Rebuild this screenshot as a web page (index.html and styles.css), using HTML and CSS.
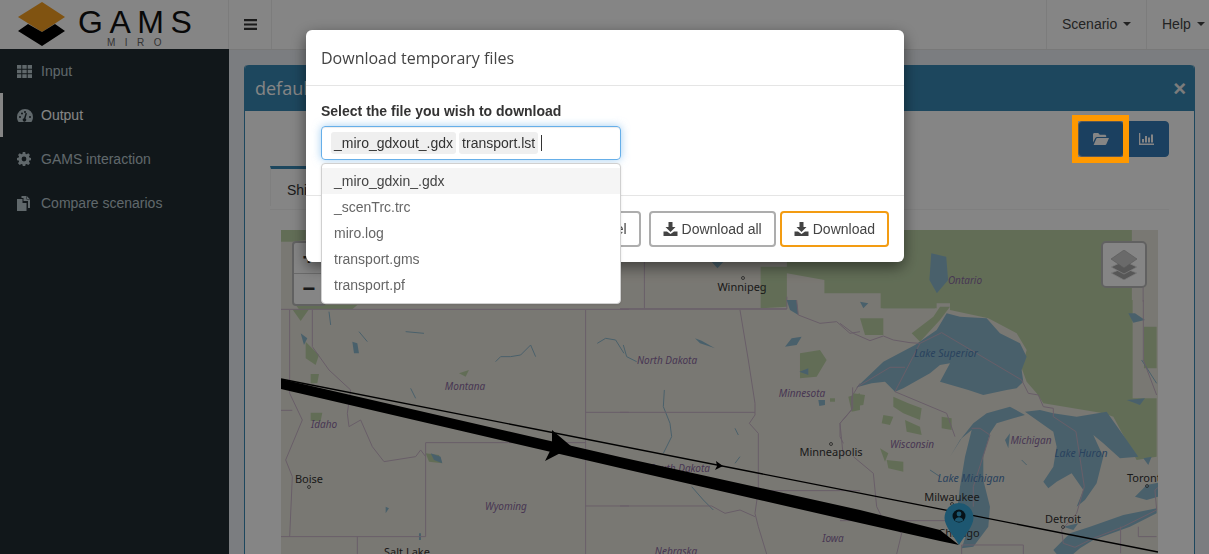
FILE: index.html
```html
<!DOCTYPE html>
<html>
<head>
    <title>GAMS MIRO</title>
<link rel="stylesheet" href="styles.css">
</head>
<body>

<div class="app">

  <header class="topbar">
    <div class="logo">
      <svg class="logo-mark" viewBox="0 0 84 50" width="84" height="50">
        <polygon class="logo-top" points="18,17 42,2 65,17 42,32"/>
        <polygon class="logo-bottom" points="18,31 28,24 42,32 55,24 65,31 42,46"/>
      </svg>
      <div class="logo-text">
        <span class="logo-gams">GAMS</span>
        <span class="logo-miro">MIRO</span>
      </div>
    </div>
    <div class="hamburger">
      <svg viewBox="0 0 13 11" width="13" height="11"><path d="M0 0h13v2.200H0zM0 4.400h13v2.200H0zM0 8.800h13V11H0z"/></svg>
    </div>
    <div class="spacer"></div>
    <div class="topmenu scenario">Scenario <span class="caret"></span></div>
    <div class="topmenu help">Help <span class="caret"></span></div>
  </header>

  <div class="main">
    <nav class="sidebar">
      <a class="side-item">
        <span class="side-icon"><svg viewBox="0 0 15 13" width="15" height="13"><path d="M0 0h4.300v3.700H0zM5.300 0h4.400v3.700H5.300zM10.700 0H15v3.700h-4.300zM0 4.700h4.300v3.600H0zM5.300 4.700h4.400v3.600H5.300zM10.700 4.700H15v3.600h-4.300zM0 9.300h4.300V13H0zM5.300 9.300h4.400V13H5.300zM10.700 9.300H15V13h-4.300z"/></svg></span>
        Input
      </a>
      <a class="side-item active">
        <span class="side-icon"><svg viewBox="0 0 16 13" width="16" height="13"><path fill-rule="evenodd" d="M8 0a8 8 0 0 1 8 8c0 1.900-.6 3.600-1.600 5H1.600C.6 11.600 0 9.900 0 8a8 8 0 0 1 8-8zM8.600 4 7 9.200a1.700 1.700 0 1 0 1.500.3L10 4.300zM3 7a1 1 0 1 0 0 2 1 1 0 0 0 0-2zM5 3.500a1 1 0 1 0 0 2 1 1 0 0 0 0-2zM13 7a1 1 0 1 0 0 2 1 1 0 0 0 0-2zM8 2a1 1 0 1 0 0 2 1 1 0 0 0 0-2z"/></svg></span>
        Output
      </a>
      <a class="side-item">
        <span class="side-icon"><svg viewBox="0 0 14 14" width="14" height="14"><path fill-rule="evenodd" d="M5.800 0h2.400l.4 1.900 1 .4L11.300 1.200 13 2.900l-1.100 1.700.4 1L14 5.900v2.300l-1.700.4-.4 1 1.100 1.700-1.700 1.700-1.700-1.100-1 .4-.4 1.700H5.800l-.4-1.700-1-.4-1.700 1.100L1 11.300l1.100-1.700-.4-1L0 8.200V5.900l1.700-.3.4-1L1 2.900l1.700-1.700 1.700 1.100 1-.4zM7 4.600a2.400 2.400 0 1 0 0 4.800 2.400 2.400 0 0 0 0-4.800z"/></svg></span>
        GAMS interaction
      </a>
      <a class="side-item">
        <span class="side-icon"><svg viewBox="0 0 13 15" width="13" height="15"><path d="M4.500 2V0h5v3.500h3.500V12h-2V5H6.500V2zM10 .3l2.700 2.700H10zM0 3h5.500v4h4v8H0z"/></svg></span>
        Compare scenarios
      </a>
    </nav>

    <section class="content">
      <div class="box">
        <div class="box-header">
          <span class="box-title">default</span>
          <span class="box-close">&times;</span>
        </div>
        <div class="box-body">
          <div class="view-buttons">
            <button class="view-btn current">
              <svg viewBox="0 0 16 12" width="16" height="12"><path d="M0 1.500C0 .7.600 0 1.400 0h3.800l1.600 1.700h5c.8 0 1.400.6 1.400 1.300v1H4.200c-.9 0-1.500.4-1.900 1.100L0 9.500z"/><path d="M4.300 5H16l-2.700 6.200c-.2.500-.6.800-1.200.8H.6l2.700-6.300c.2-.4.500-.7 1-.7z"/></svg>
              <span class="ring"></span>
            </button>
            <button class="view-btn">
              <svg viewBox="0 0 15 12" width="15" height="12"><path d="M0 0h1.300v10.500H15V12H0zM3 6h2v3.500H3zM6 3h2v6.500H6zM9 4.500h2v5H9zM12 1.500h2v8h-2z"/></svg>
            </button>
          </div>
          <div class="tabs">
            <div class="tab">Shipments</div>
          </div>

          <div class="map">
            <svg class="map-svg" viewBox="281 230 877 324" width="877" height="324">
              <rect class="land" x="281" y="230" width="877" height="324"/>

              <!-- west part -->
              <g transform="translate(229 220) scale(.3333)">
                <path class="forest" d="M156 30H230V60L190 65H156zM190 268l25 35 25-35zM230 365l40 40-10 30-30-20zM245 462l25 0-5 28-20 0zM245 578h35l-5 25h-30zM590 700l40 5 10 25-40-5zM690 460l30-10-10 20zM200 255H385L370 268H210z"/>
                <path class="water" d="M370 365l15 5 5 30-15 0zM215 340l20 15-10 20zM470 860l10 5-10 15zM570 940h6v20h-6zM605 700l30 10 5 20-25-10z"/>
                <path class="river" d="M800 425l15-15 30 0 30-5 30-30 15 35M1105 370l25-15 30 5 25 40M545 505l15 30M530 335l55 5M390 335l25 30M300 275l5 40"/>
                <path class="border" d="M156 268H1200M250 270V380L300 450L365 510L355 580L360 620L395 600L430 680L465 725L560 710L575 690L590 710M590 668H1070M590 668V950M1070 270V1002M1070 577H1200M1070 858H1200M182 270V520L220 600L170 720L190 770L182 950M156 950H590M385 950V1002M156 571H190"/>
              </g>

              <!-- strip above 300, Canada side -->
              <g transform="translate(620 260) scale(.375 .3333)">
                <path class="forest" d="M880-90H1365V125H880zM445-90H880V130H840V145H695V100H545V60L445 40zM375 20H445V140L375 145z"/>
                <path class="water" d="M830-20L870-10L875 60L845 100L825 60zM240 0L280 0L260 25z"/>
                <path class="border" d="M0 147H445V110M65-40V145M1395 0V125"/>
              </g>

              <!-- middle part -->
              <g transform="translate(620 300) scale(.3333)">
                <path class="forest" d="M540 160L600 150L620 180L590 230L540 235zM685 290L720 280V330L695 335zM630 295H645V305H630z"/>
                <path class="water" d="M495 140L515 115L545 110L530 135zM538 215L565 205L565 225zM595 300L615 300L615 315L598 318zM500 0L530 0L535 45L510 30zM225 115L245 122L285 145L240 130z"/>
                <path class="river" d="M10 135L20 170L50 185M133 270L130 320L150 370L155 410L130 460M215 560L250 600L280 630M345 385L355 405M345 490L360 470"/>
                <path class="border" d="M0 27H500M360 30L385 180L405 310V345L388 370L415 400V570L405 640L415 680L440 762M0 337H405M0 618H275L315 640L360 630L405 650M415 572H720M720 250L695 290V330L660 370L670 470M530 0L535 45L600 70L650 65L690 100L720 95"/>
              </g>

              <!-- east part -->
              <g transform="translate(840 300) scale(.3333)">
                <path class="forest" d="M330 0H878V295H950V470L890 480L820 350L790 340L610 310L590 280L560 245L545 205L560 150L530 100L445 55L330 30zM912 80H950V205H912zM128 0H290V25H128zM60 55H130V105H75zM215 100L280 50L300 20L330 20L300 60L240 125zM40 280L75 285L70 315L35 320zM160 290L205 310L245 325L240 360L190 340L160 320zM130 345L160 350L150 375L125 370zM305 350L335 355L335 390L305 385zM140 480L190 485L190 515L145 505zM120 445L145 460L135 485zM195 360L240 380L245 405L200 395z"/>
                <path class="water" d="M50 262L130 185L225 135L290 90L320 40L360 50L440 55L480 100L540 130L560 170L545 210L550 245L530 265L500 270L430 285L385 270L300 245L330 190L300 195L270 220L190 265L165 275L135 245L95 250z"/>
                <path class="water" d="M330 470L360 420L400 370L440 340L510 320L555 345L520 355L470 370L450 400L430 470L430 540L450 620L445 680L400 740L365 745L380 700L350 640L360 560L375 470L395 390L365 415z"/>
                <path class="water" d="M555 335L600 330L640 340L710 350L800 335L860 420L895 470L840 475L790 430L760 405L790 470L770 550L735 600L710 620L730 570L695 520L650 545L625 565L610 545L640 500L650 440L640 395L590 360z"/>
                <path class="water" d="M640 750L690 700L750 680L850 645L950 625V640L870 680L760 720L720 745L700 762H650zM885 590L920 555L955 548V590L920 600zM670 680L715 670L700 690zM865 40L885 40L915 60L880 68zM860 300L915 295L900 315zM60 5L85 10L70 25zM495 420L510 400L505 445zM910 475L935 470L925 495z"/>
                <path class="river" d="M905 180L950 250M270 510L300 530M545 480L560 495"/>
                <path class="border" d="M0 70L40 100L90 122L130 108L160 120L210 128L240 130L305 98L545 240L565 280L595 285L610 320L640 325V350L708 395L733 560L710 640L665 690L670 730L705 742L760 715L850 680L950 630L945 570L955 562M240 130L165 275L320 340L345 410M50 262L150 202H195M38 262V325L0 370V410L10 430M40 470L100 520L110 620L130 660L185 700L170 762M0 662H330M365 762V735H550V762M395 385H420L450 405L400 560V620M910 0V180L950 285M842 680V760M895 680V710H950"/>
              </g>

              <circle class="dot" cx="743" cy="278" r="1.500"/>
              <circle class="dot" cx="831" cy="444" r="1.500"/>
              <circle class="dot" cx="309" cy="487" r="1.500"/>
              <circle class="dot" cx="1147" cy="486" r="1.500"/>
              <circle class="dot" cx="1063" cy="527" r="1.500"/>
              <circle class="dot" cx="952" cy="504" r="1.500"/>

              <text class="state" x="965" y="284">Ontario</text>
              <text class="state" x="667" y="364">North Dakota</text>
              <text class="state" x="802" y="397">Minnesota</text>
              <text class="state" x="912" y="448">Wisconsin</text>
              <text class="state" x="1031" y="444">Michigan</text>
              <text class="state" x="833" y="542">Iowa</text>
              <text class="state" x="676" y="555">Nebraska</text>
              <text class="state" x="680" y="472">South Dakota</text>
              <text class="state" x="465" y="390">Montana</text>
              <text class="state" x="324" y="428">Idaho</text>
              <text class="state" x="506" y="510">Wyoming</text>
              <text class="lake" x="946" y="357">Lake Superior</text>
              <text class="lake" x="1081" y="457">Lake Huron</text>
              <text class="lake" x="971" y="482">Lake Michigan</text>
              <text class="city" x="742" y="291">Winnipeg</text>
              <text class="city" x="831" y="456">Minneapolis</text>
              <text class="city" x="952" y="501">Milwaukee</text>
              <text class="city toronto" x="1127" y="482">Toronto</text>
              <text class="city" x="1063" y="523">Detroit</text>
              <text class="city" x="959" y="537">Chicago</text>
              <text class="city" x="309" y="483">Boise</text>
              <text class="city" x="407" y="556">Salt Lake</text>

              <path class="flow-thin" d="M281 379L1158 552"/>
              <polygon class="flow" points="281,379 620,457 860,510 940,530 959,545 940,541 860,523 620,468 281,389"/>
              <polygon class="flow" points="552,430 572,447 545,461 552,447"/>
              <polygon class="flow" points="716,461 723,466 715,470 717,466"/>

              <path class="marker" d="M959 503c-8 0-14.500 6.500-14.500 15 0 8 9 18 14.500 27 5.500-9 14.500-19 14.500-27 0-8.500-6.500-15-14.500-15z"/>
              <circle class="marker-user" cx="959" cy="516" r="6.500"/>
              <circle class="marker-head" cx="959" cy="514" r="2.400"/>
              <path class="marker-head" d="M954.800 520.200c.6-2 2.400-3 4.200-3s3.600 1 4.200 3c-1 1-2.500 1.500-4.200 1.500s-3.200-.5-4.200-1.500z"/>
            </svg>

            <div class="zoom-control">
              <div class="zoom-btn plus">+</div>
              <div class="zoom-btn">&minus;</div>
            </div>
            <div class="layers-control">
              <svg viewBox="0 0 28 30" width="28" height="30">
                <polygon class="layer" points="14,18 27,23 14,30 1,23"/>
                <polygon class="layer" points="14,11 27,17 14,24 1,17"/>
                <polygon class="layer-top" points="14,0 27,9 14,18 1,9"/>
              </svg>
            </div>
          </div>
        </div>
      </div>
    </section>
  </div>
</div>

<div class="backdrop"></div>

<div class="modal">
  <div class="modal-header">Download temporary files</div>
  <div class="modal-body">
    <label class="field-label">Select the file you wish to download</label>
    <div class="selectize">
      <div class="select-input">
        <span class="tag">_miro_gdxout_.gdx</span>
        <span class="tag">transport.lst</span>
        <span class="cursor"></span>
      </div>
      <div class="select-dropdown">
        <div class="option active">_miro_gdxin_.gdx</div>
        <div class="option">_scenTrc.trc</div>
        <div class="option">miro.log</div>
        <div class="option">transport.gms</div>
        <div class="option">transport.pf</div>
      </div>
    </div>
  </div>
  <div class="modal-footer">
    <button class="btn cancel">Cancel</button>
    <button class="btn">
      <svg class="dl-icon" viewBox="0 0 14 14" width="15" height="14"><path d="M5 0h4v5h3L7 10 2 5h3z"/><path d="M0 9.500h3.500L7 12l3.500-2.500H14V14H0zM11 11.300h1v1h-1z"/></svg>
      Download all
    </button>
    <button class="btn primary">
      <svg class="dl-icon" viewBox="0 0 14 14" width="15" height="14"><path d="M5 0h4v5h3L7 10 2 5h3z"/><path d="M0 9.500h3.500L7 12l3.500-2.500H14V14H0zM11 11.300h1v1h-1z"/></svg>
      Download
    </button>
  </div>
</div>

</body>
</html>
```

FILE: styles.css
```css
html, body {
    margin: 0;
    height: 100%;
    overflow: hidden;
}

body {
    font-family: "Liberation Sans", Arial, sans-serif;
    font-size: 14px;
    color: #333;
    background-color: #ecf0f5;
}

.app {
    display: flex;
    flex-direction: column;
    height: 100vh;
    overflow: hidden;
}

/* top bar */

.topbar {
    display: flex;
    flex: none;
    height: 49px;
    background-color: #fff;
    box-shadow: 0 1px 0 #e6e6e6;
}

.logo {
    display: flex;
    width: 228px;
    flex: none;
}

.logo-mark {
    flex: none;
    margin-right: -6px;
}

.logo-top {
    fill: #f59f22;
}

.logo-bottom {
    fill: #000;
}

.logo-text {
    display: flex;
    flex-direction: column;
    align-items: flex-start;
}

.logo-gams {
    font-size: 32px;
    line-height: 32px;
    margin-top: 6px;
    letter-spacing: 6.500px;
    color: #111;
    white-space: nowrap;
}

.logo-miro {
    font-size: 10px;
    line-height: 11px;
    margin-top: -1px;
    padding-left: 29px;
    letter-spacing: 9.500px;
    color: #666;
}

.hamburger {
    display: flex;
    align-items: center;
    justify-content: center;
    width: 42px;
    border-left: 1px solid #eee;
    border-right: 1px solid #eee;
}

.hamburger svg {
    fill: #333;
}

.spacer {
    flex: 1;
}

.topmenu {
    display: flex;
    align-items: center;
    gap: 6px;
    border-left: 1px solid #eee;
    padding: 0 0 2px 15px;
    color: #444;
}

.scenario {
    width: 84px;
}

.help {
    width: 47px;
}

.caret {
    border-top: 4px solid #444;
    border-left: 4px solid transparent;
    border-right: 4px solid transparent;
}

/* sidebar and content */

.main {
    display: flex;
    flex: 1;
    min-height: 0;
}

.sidebar {
    flex: none;
    width: 229px;
    background-color: #222d32;
}

.side-item {
    display: flex;
    align-items: center;
    height: 44px;
    padding-left: 17px;
    color: #b8c7ce;
}

.side-item.active {
    padding-left: 14px;
    border-left: 3px solid #fff;
    color: #fff;
}

.side-icon {
    display: flex;
    flex: none;
    width: 24px;
    fill: #b8c7ce;
}

.content {
    flex: 1;
    min-width: 0;
    padding: 16px 14px 0 15px;
}

.box {
    border: 1px solid #3888b4;
    border-top: 0;
    border-radius: 4px 4px 0 0;
    background-color: #fff;
    height: 520px;
}

.box-header {
    display: flex;
    align-items: center;
    justify-content: space-between;
    height: 46px;
    padding: 0 8px 0 10px;
    background-color: #3888b4;
    color: #fff;
    border-radius: 4px 4px 0 0;
}

.box-title {
    font-family: "Open Sans", sans-serif;
    font-size: 18px;
}

.box-close {
    font-size: 22px;
    font-weight: bold;
    color: #eee;
    margin-top: 2px;
}

.box-body {
    padding: 10px 25px 0;
}

.view-buttons {
    display: flex;
    justify-content: flex-end;
    height: 36px;
}

.view-btn {
    position: relative;
    width: 45px;
    height: 36px;
    padding: 0;
    border: 1px solid #357bb8;
    background-color: #357bb8;
    border-radius: 0 4px 4px 0;
    fill: #fff;
}

.view-btn.current {
    width: 46px;
    border-color: #aaa;
    border-radius: 4px;
}

.view-btn svg {
    display: block;
    margin: 0 auto;
}

/* the orange marker is not dimmed by the backdrop */
.ring {
    position: absolute;
    top: -7px;
    left: -7px;
    right: -6px;
    bottom: -7px;
    border: 6px solid #f90;
    z-index: 20;
}

.tabs {
    height: 43px;
    margin-top: 9px;
    border-bottom: 1px solid #f4f4f4;
}

.tab {
    width: 100px;
    height: 40px;
    line-height: 43px;
    padding-left: 16px;
    border-top: 3px solid #3888b4;
    border-left: 1px solid #f4f4f4;
    box-sizing: border-box;
}

/* map */

.map {
    position: relative;
    width: 877px;
    margin: 20px 0 0 11px;
}

.map-svg {
    display: block;
}

.land { fill: #e9e6dc; }
.forest { fill: #bcd2a6; }
.water { fill: #8db9ce; }

.river {
    fill: none;
    stroke: #8db9ce;
    stroke-width: 1;
    vector-effect: non-scaling-stroke;
}

.border {
    fill: none;
    stroke: #c8b4c8;
    stroke-width: 1;
    vector-effect: non-scaling-stroke;
}

.dot {
    fill: none;
    stroke: #444;
    stroke-width: .8;
}

.state, .lake, .city {
    text-anchor: middle;
    font-family: "Noto Sans", sans-serif;
}

.state {
    font-size: 10px;
    font-style: italic;
    fill: #8a6aa0;
}

.lake {
    font-size: 10.500px;
    font-style: italic;
    fill: #4f80b4;
}

.city {
    font-size: 11px;
    fill: #333;
}

.toronto {
    text-anchor: start;
}

.flow { fill: #000; }

.flow-thin {
    fill: none;
    stroke: #000;
    stroke-width: 1.300;
}

.marker { fill: #38a8d8; }
.marker-user { fill: #0c2430; }
.marker-head { fill: #38a8d8; }

.zoom-control {
    position: absolute;
    top: 11px;
    left: 11px;
    background-color: #fff;
    border: 2px solid #bbb;
    border-radius: 4px;
}

.zoom-btn {
    width: 30px;
    height: 30px;
    font-size: 22px;
    line-height: 30px;
    text-align: center;
    font-weight: bold;
}

.zoom-btn.plus {
    border-bottom: 1px solid #ccc;
}

.layers-control {
    position: absolute;
    top: 11px;
    right: 11px;
    display: flex;
    align-items: center;
    justify-content: center;
    width: 42px;
    height: 43px;
    background-color: #fff;
    border: 2px solid #bbb;
    border-radius: 5px;
}

.layer {
    fill: #a8a8a8;
    stroke: #eee;
    stroke-width: .8;
}

.layer-top {
    fill: #ccc;
    stroke: #aaa;
    stroke-width: .6;
}

/* dialog */

.backdrop {
    position: fixed;
    top: 0;
    left: 0;
    right: 0;
    bottom: 0;
    background-color: #000;
    opacity: .48;
    z-index: 10;
}

.modal {
    position: fixed;
    top: 30px;
    left: 306px;
    width: 598px;
    background-color: #fff;
    border-radius: 6px;
    box-shadow: 0 5px 15px rgba(0, 0, 0, .5);
    z-index: 15;
}

.modal-header {
    height: 56px;
    box-sizing: border-box;
    padding: 16px 15px 15px;
    line-height: 25px;
    font-family: "Open Sans", sans-serif;
    font-size: 16px;
    color: #444;
    border-bottom: 1px solid #e5e5e5;
}

.modal-body {
    height: 109px;
    box-sizing: border-box;
    padding: 15px 15px 0;
}

.field-label {
    display: block;
    font-weight: bold;
    line-height: 20px;
    margin-bottom: 5px;
}

.selectize {
    position: relative;
    width: 300px;
}

.select-input {
    display: flex;
    align-items: center;
    height: 34px;
    box-sizing: border-box;
    padding-left: 9px;
    gap: 3px;
    border: 1px solid #66afe9;
    border-radius: 4px;
    box-shadow: inset 0 1px 1px rgba(0, 0, 0, .075), 0 0 8px rgba(102, 175, 233, .6);
}

.tag {
    padding: 0 3px;
    line-height: 22px;
    background-color: #efefef;
    border-radius: 3px;
}

.cursor {
    width: 1px;
    height: 16px;
    background-color: #333;
}

.select-dropdown {
    position: absolute;
    top: 37px;
    left: 0;
    right: 0;
    padding: 4px 0 5px;
    background-color: #fff;
    border: 1px solid #d0d0d0;
    border-radius: 4px;
    box-sizing: border-box;
    box-shadow: 0 1px 3px rgba(0, 0, 0, .1);
    z-index: 2;
}

.option {
    height: 26px;
    line-height: 26px;
    padding-left: 12px;
    color: #666;
}

.option.active {
    background-color: #f5f5f5;
    color: #444;
}

.modal-footer {
    display: flex;
    justify-content: flex-end;
    gap: 4px;
    padding: 15px;
    border-top: 1px solid #e5e5e5;
}

.btn {
    display: flex;
    align-items: center;
    gap: 4px;
    height: 36px;
    padding: 0 12px;
    font: inherit;
    color: #444;
    background-color: #fff;
    border: 2px solid #adadad;
    border-radius: 4px;
}

.btn.cancel {
    margin-right: 4px;
}

.btn.primary {
    border-color: #f39c12;
}

.dl-icon {
    fill: #444;
}
```
